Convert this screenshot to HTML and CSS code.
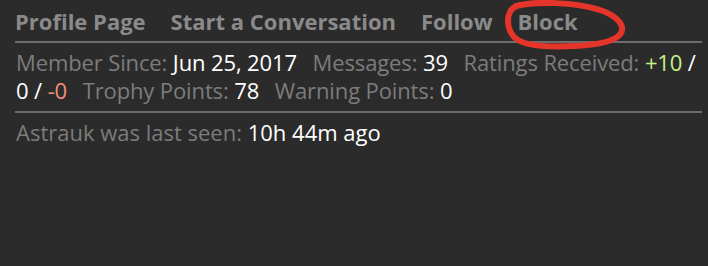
FILE: index.html
```html
<!DOCTYPE html>
<html>
<head>
<meta charset="utf-8">
<link rel="stylesheet" href="styles.css">
</head>
<body>
<div class="card">
  <nav class="tabs">
    <a class="tab">Profile Page</a>
    <a class="tab">Start a Conversation</a>
    <a class="tab">Follow</a>
    <a class="tab block">Block</a>
  </nav>
  <div class="stats">
    <span class="pair"><span class="tok label">Member Since:</span> <span class="tok val">Jun 25, 2017</span></span>
    <span class="pair"><span class="tok label">Messages:</span> <span class="tok val">39</span></span>
    <span class="pair"><span class="tok label">Ratings Received:</span> <span class="tok val"><span class="pos">+10</span> /</span> <span class="tok val">0 /</span> <span class="tok neg">-0</span></span>
    <span class="pair"><span class="tok label">Trophy Points:</span> <span class="tok val">78</span></span>
    <span class="pair"><span class="tok label">Warning Points:</span> <span class="tok val">0</span></span>
  </div>
  <div class="seen">
    <span class="label">Astrauk was last seen:</span> <span class="val">10h 44m ago</span>
  </div>
  <svg class="circle" width="130" height="54" viewBox="0 0 130 54">
    <path d="M16 6 C35 1, 75 2, 100 10 C118 16, 125 26, 121 33 C116 42, 95 45, 75 46 C55 47, 30 47, 18 40 C8 34, 6 20, 10 12 C12 8, 15 6, 20 5" fill="none" stroke="#e5352a" stroke-width="6" stroke-linecap="round"/>
  </svg>
</div>
</body>
</html>
```
FILE: styles.css
```css
html, body {
  margin: 0;
  padding: 0;
  background: #2b2b2b;
  width: 708px;
  height: 266px;
  overflow: hidden;
}
.card {
  position: relative;
  padding: 7px 6px 0 15px;
  font-family: "Open Sans", "Noto Sans", sans-serif;
  font-size: 22px;
  color: #7c7c7c;
}
.tabs {
  display: flex;
  gap: 25px;
  padding: 0 0 6px 0;
  border-bottom: 2px solid #6c6c6c;
  line-height: 28px;
}
.tab {
  font-weight: 700;
  color: #8a8a8a;
}
.stats {
  padding: 5px 0 7px 1px;
  line-height: 28px;
  letter-spacing: -0.12px;
  border-bottom: 2px solid #6c6c6c;
}
.tok {
  display: inline-block;
  height: 28px;
  vertical-align: top;
}
.pair {
  margin-right: 10px;
}
.label { color: #7c7c7c; }
.val { color: #ffffff; }
.pos { color: #c4f08c; }
.neg { color: #f2907a; }
.seen {
  padding: 5px 0 0 1px;
  line-height: 28px;
}
.circle {
  position: absolute;
  left: 500px;
  top: 0;
}
```
